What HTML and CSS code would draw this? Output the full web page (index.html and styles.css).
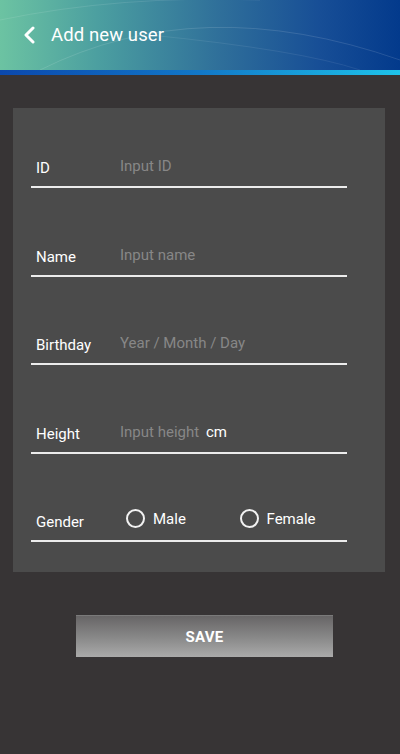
FILE: index.html
```html
<!DOCTYPE html>
<html lang="en">
<head>
  <meta charset="UTF-8">
  <title>Add new user</title>
  <meta name="viewport" content="width=device-width, initial-scale=1.0">
  <link rel="stylesheet" href="styles.css">
</head>
<body>
  <header class="topbar">
    <svg class="arcs" width="400" height="70" viewBox="0 0 400 70">
      <path d="M40 70 Q200 -10 400 60" fill="none" stroke="rgba(255,255,255,0.12)" stroke-width="1"/>
      <path d="M0 20 Q120 -5 260 0" fill="none" stroke="rgba(255,255,255,0.10)" stroke-width="1"/>
      <path d="M150 35 Q300 50 360 70" fill="none" stroke="rgba(255,255,255,0.08)" stroke-width="1"/>
    </svg>
    <button class="back" type="button">
      <svg width="14" height="18" viewBox="0 0 14 18">
        <polyline points="10,2 3,9 10,16" fill="none" stroke="#fff" stroke-width="3" stroke-linecap="round" stroke-linejoin="round"/>
      </svg>
    </button>
    <h1>Add new user</h1>
  </header>
  <div class="stripe"></div>

  <main class="content">
    <form class="panel" id="userForm">
      <div class="row">
        <label for="uid">ID</label>
        <input type="text" id="uid" placeholder="Input ID">
      </div>
      <div class="row">
        <label for="uname">Name</label>
        <input type="text" id="uname" placeholder="Input name">
      </div>
      <div class="row">
        <label for="ubirth">Birthday</label>
        <input type="text" id="ubirth" placeholder="Year / Month / Day">
      </div>
      <div class="row">
        <label for="uheight">Height</label>
        <input type="text" id="uheight" class="short" placeholder="Input height">
        <span class="unit">cm</span>
      </div>
      <div class="row">
        <label>Gender</label>
        <span class="radio"><span class="dot"></span>Male</span>
        <span class="radio female"><span class="dot"></span>Female</span>
      </div>
    </form>

    <button class="save" type="submit" form="userForm">SAVE</button>
  </main>
</body>
</html>
```

FILE: styles.css
```css
body {
  margin: 0;
  background-color: #373435;
  font-family: Roboto, "Noto Sans", sans-serif;
  color: #fff;
}
.topbar {
  position: relative;
  height: 70px;
  display: flex;
  align-items: center;
  background: linear-gradient(90deg, #6cc3a2 0%, #4b9ea0 25%, #2f6f9a 55%, #174e96 80%, #033a8c 100%);
  overflow: hidden;
}
.arcs {
  position: absolute;
  left: 0;
  top: 0;
}
.back {
  background: none;
  border: none;
  padding: 0;
  margin: 0 0 0 23px;
  width: 14px;
  height: 18px;
  display: flex;
}
.topbar h1 {
  margin: 0 0 0 14px;
  font-size: 18.5px;
  font-weight: normal;
  letter-spacing: 0.1px;
}
.stripe {
  height: 5px;
  background: linear-gradient(90deg, #0b48ad 0%, #1278c8 50%, #1ec3ea 100%);
}
.content {
  padding: 33px 15px 0 13px;
}
.panel {
  background-color: #4b4b4b;
  padding: 38px 38px 30px 18px;
  display: flex;
  flex-direction: column;
  gap: 46.5px;
}
.row {
  display: flex;
  align-items: flex-end;
  padding: 0 0 10px 5px;
  border-bottom: 2px solid #ececec;
  box-sizing: border-box;
  height: 42px;
  font-size: 15px;
  line-height: 16px;
}
.row label {
  width: 84px;
  flex-shrink: 0;
}
.row input {
  flex: 1;
  min-width: 0;
  background: none;
  border: none;
  outline: none;
  padding: 0;
  margin: 0 0 2px 0;
  font-family: inherit;
  font-size: 15px;
  line-height: 16px;
  color: #fff;
}
.row input::placeholder {
  color: #878787;
}
.row input.short {
  flex: 0 0 86px;
}
.unit {
  margin: 0 0 2px 0;
}
.radio {
  display: flex;
  align-items: center;
  gap: 8px;
  margin: 0 0 2px 6px;
  width: 110px;
}
.radio .dot {
  width: 15px;
  height: 15px;
  border: 2px solid #f2f2f2;
  border-radius: 50%;
}
.save {
  display: block;
  margin: 43px 0 0 63px;
  width: 257px;
  height: 42px;
  border: none;
  border-top: 1px solid #7a7a7a;
  background: linear-gradient(180deg, #676566 0%, #8a8a8a 55%, #aaaaaa 100%);
  color: #fff;
  font-family: inherit;
  font-size: 15px;
  font-weight: bold;
  letter-spacing: 0.3px;
}
```
